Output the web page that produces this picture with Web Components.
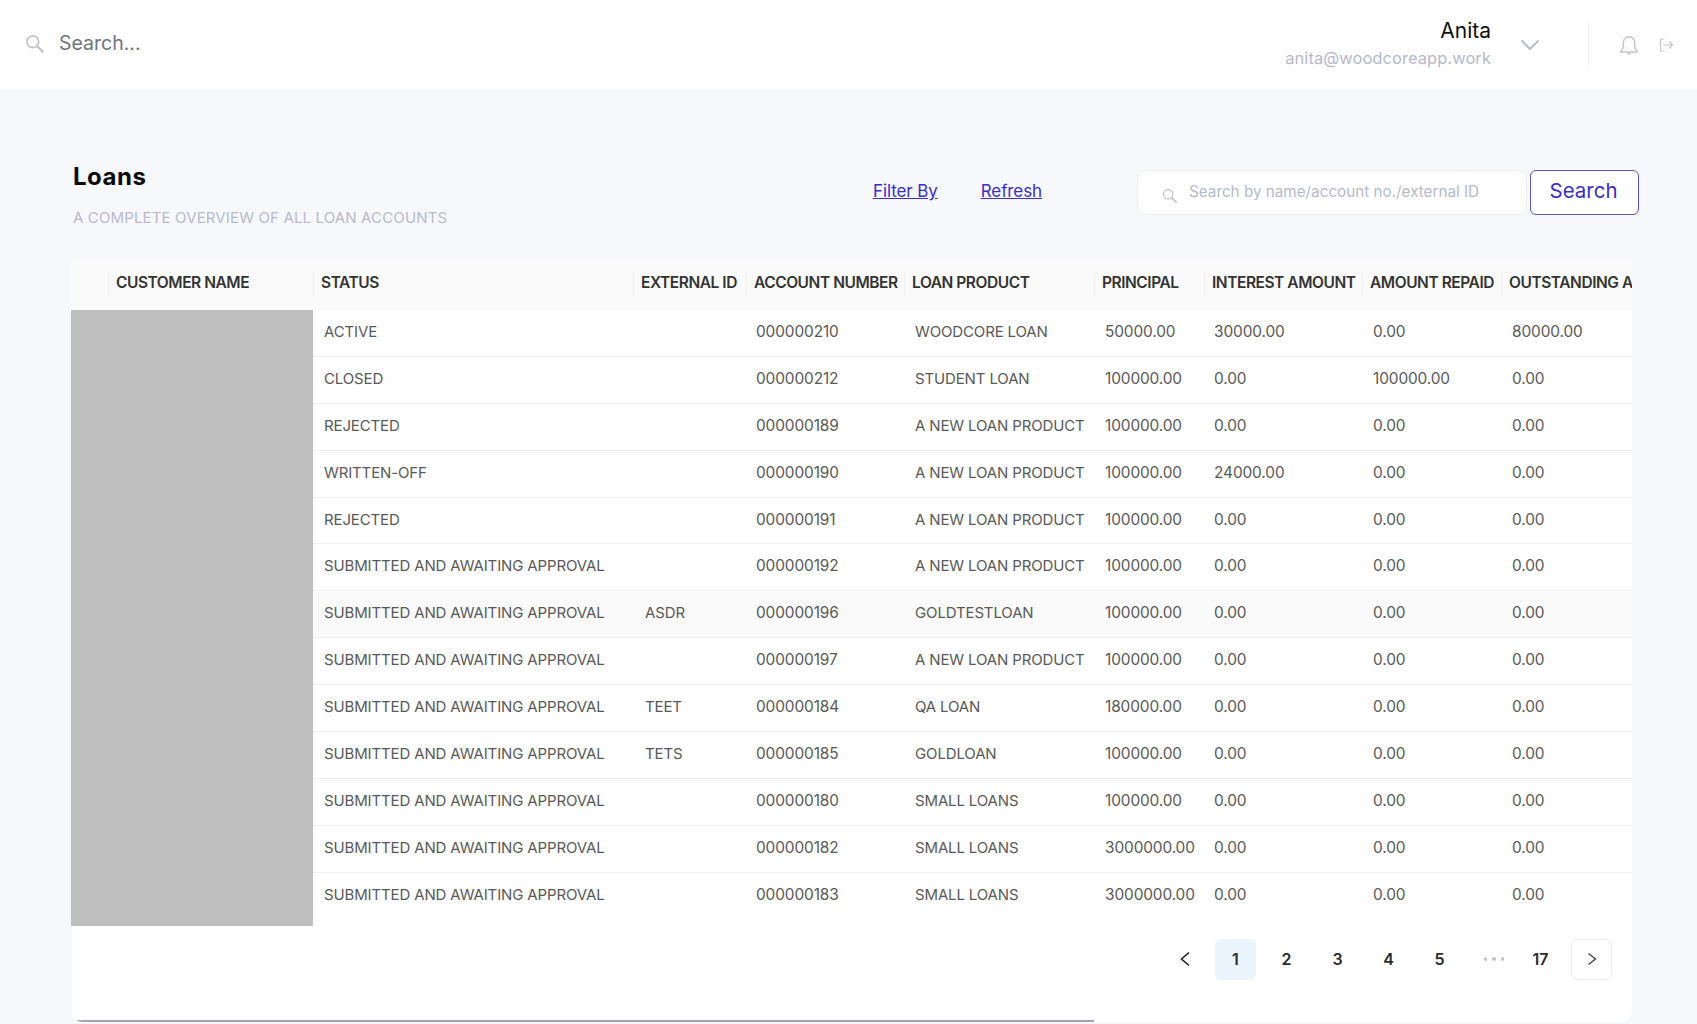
<!DOCTYPE html>
<html><head><meta charset="utf-8"><title>Loans</title>
<style>
html,body{margin:0;height:1024px;overflow:hidden;background:#f7f8fc;font-family:Inter,"Noto Sans",sans-serif;color:#595959}
</style></head><body>
<loan-page>
  <top-bar name="Anita" email="anita@woodcoreapp.work"></top-bar>
  <page-main>
    <page-title slot="title" heading="Loans" sub="A COMPLETE OVERVIEW OF ALL LOAN ACCOUNTS"></page-title>
    <toolbar-actions slot="actions"></toolbar-actions>
    <loan-table slot="table"></loan-table>
  </page-main>
</loan-page>
<script>
const searchIcon=(s,c)=>`<svg width="${s}" height="${s}" viewBox="0 0 20 20" fill="none" stroke="${c}" stroke-width="1.7" stroke-linecap="round"><circle cx="8.2" cy="8.2" r="6.2"/><path d="M12.8 12.8l6 6" stroke-width="2.2"/></svg>`;
function def(name,css,html){
  customElements.define(name,class extends HTMLElement{
    connectedCallback(){
      if(this.shadowRoot)return;
      const r=this.attachShadow({mode:'open'});
      r.innerHTML=`<style>${css}</style>`+(typeof html==='function'?html(this):html);
    }
  });
}
customElements.define('loan-page',class extends HTMLElement{
  constructor(){super();this.attachShadow({mode:'open'}).innerHTML='<style>:host{display:block;height:1024px;overflow:hidden}</style><slot></slot>';}
});
def('top-bar',`
:host{display:flex;align-items:center;height:89px;background:#fff;box-sizing:border-box;padding:0 24px 0 25px}
.s{display:flex;align-items:center;gap:15px;flex:1;color:#6f7480;font-size:19.500px;margin-top:-4px}
.s svg{display:block;margin-top:2px}
.u{text-align:right;margin-right:29px}
.n{color:#111;font-size:21px;line-height:24px}
.e{color:#b6b9ca;font-size:16.500px;line-height:24px;margin-top:3px;letter-spacing:.05px}
.c{display:block;margin-right:48px;margin-top:1px}
.d{width:1px;height:48px;background:#f5f5f7;margin-right:30px}
.b{display:block;margin-right:20px;margin-top:0}
.l{display:block;margin-top:1px}
`,h=>`<div class="s">${searchIcon(19,'#bfc2cc')}<span>Search...</span></div>
<div class="u"><div class="n">${h.getAttribute('name')}</div><div class="e">${h.getAttribute('email')}</div></div>
<svg class="c" width="20" height="12" viewBox="0 0 20 12" fill="none" stroke="#b9bcca" stroke-width="2"><path d="M1.500 1.500L10 10l8.500-8.500"/></svg>
<div class="d"></div>
<svg class="b" width="20" height="20" viewBox="0 0 20 20" fill="none" stroke="#c3c5cf" stroke-width="1.500" stroke-linejoin="round"><path d="M1.500 17h17c-1.800-1.800-2.800-3-2.800-6V7.500a5.700 5.700 0 0 0-11.400 0V11c0 3-1 4.200-2.800 6z"/><path d="M8 18.500h4"/></svg>
<svg class="l" width="14" height="14" viewBox="0 0 14 14" fill="none" stroke="#c3c5cf" stroke-width="1.200" stroke-linecap="round" stroke-linejoin="round"><path d="M5 1H1.500v12H5"/><path d="M4.500 7h9M10.500 4l3 3-3 3"/></svg>`);
def('page-main',`
:host{display:block;box-sizing:border-box;padding:69px 58px 0 71px}
.top{display:flex;justify-content:space-between;height:100px}
.tb{margin-left:2px}
`,`<div class="top"><div class="tb"><slot name="title"></slot></div><slot name="actions"></slot></div><slot name="table"></slot>`);
def('page-title',`
:host{display:block}
h1{margin:0;font-size:24px;line-height:32px;font-weight:700;color:#0a0a0a;letter-spacing:.5px;padding-top:3px}
p{margin:15px 0 0;font-size:15px;line-height:20px;color:#b8bbcb;letter-spacing:.14px}
`,h=>`<h1>${h.getAttribute('heading')}</h1><p>${h.getAttribute('sub')}</p>`);
def('toolbar-actions',`
:host{display:flex;align-items:flex-start;padding-top:12px}
a{color:#3a2fc4;text-decoration:underline;font-size:17px;letter-spacing:-.1px;line-height:42px;margin-right:43px;white-space:nowrap;cursor:pointer}
a.last{margin-right:95px}
.i{box-sizing:border-box;display:flex;align-items:center;width:390px;height:45px;background:#fff;border:1px solid #eceef3;border-radius:8px;padding:0 0 0 24px;gap:12px;color:#b6b9ca;font-size:15.250px}
.i svg{margin-top:5px;display:block}
.i span{margin-top:-3px}
button{box-sizing:border-box;width:109px;height:45px;margin-left:3px;background:#fff;border:1px solid #5a52c6;border-radius:6px;color:#3a2fc4;font:inherit;font-size:20.500px;padding:0 2px 5px 0}
`,`<a>Filter By</a><a class="last">Refresh</a><div class="i">${searchIcon(15,'#c0c3ce')}<span>Search by name/account no./external ID</span></div><button>Search</button>`);
const cols='37px 205px 320px 113px 158px 190px 110px 158px 139px 200px';
const rows=[
['ACTIVE','','000000210','WOODCORE LOAN','50000.00','30000.00','0.00','80000.00'],
['CLOSED','','000000212','STUDENT LOAN','100000.00','0.00','100000.00','0.00'],
['REJECTED','','000000189','A NEW LOAN PRODUCT','100000.00','0.00','0.00','0.00'],
['WRITTEN-OFF','','000000190','A NEW LOAN PRODUCT','100000.00','24000.00','0.00','0.00'],
['REJECTED','','000000191','A NEW LOAN PRODUCT','100000.00','0.00','0.00','0.00'],
['SUBMITTED AND AWAITING APPROVAL','','000000192','A NEW LOAN PRODUCT','100000.00','0.00','0.00','0.00'],
['SUBMITTED AND AWAITING APPROVAL','ASDR','000000196','GOLDTESTLOAN','100000.00','0.00','0.00','0.00'],
['SUBMITTED AND AWAITING APPROVAL','','000000197','A NEW LOAN PRODUCT','100000.00','0.00','0.00','0.00'],
['SUBMITTED AND AWAITING APPROVAL','TEET','000000184','QA LOAN','180000.00','0.00','0.00','0.00'],
['SUBMITTED AND AWAITING APPROVAL','TETS','000000185','GOLDLOAN','100000.00','0.00','0.00','0.00'],
['SUBMITTED AND AWAITING APPROVAL','','000000180','SMALL LOANS','100000.00','0.00','0.00','0.00'],
['SUBMITTED AND AWAITING APPROVAL','','000000182','SMALL LOANS','3000000.00','0.00','0.00','0.00'],
['SUBMITTED AND AWAITING APPROVAL','','000000183','SMALL LOANS','3000000.00','0.00','0.00','0.00']];
const heads=['','CUSTOMER NAME','STATUS','EXTERNAL ID','ACCOUNT NUMBER','LOAN PRODUCT','PRINCIPAL','INTEREST AMOUNT','AMOUNT REPAID','OUTSTANDING A'];
const textCol=[1,1,0,1,0,0,0,0];
def('loan-table',`
:host{display:block;width:1561px;height:764px;position:relative;overflow:hidden;background:linear-gradient(90deg,#f7f8fc 1px,#fff 1px);border-radius:0 0 12px 12px}
.head{display:grid;grid-template-columns:${cols};height:52px;background:#fafafa;align-items:center;font-size:15.500px;font-weight:600;color:#333;letter-spacing:-.45px;white-space:nowrap}
.head div{height:26px;line-height:24px;padding-left:7px;border-left:1px solid #f0f0f0}
.head div:first-child{border:0}
.body{display:flex}
.mask{width:242px;height:616px;background:#bfbfbf;flex:none}
.rows{flex:1}
.r{display:grid;grid-template-columns:322px 111px 159px 190px 109px 159px 139px 200px;height:46.900px;box-sizing:border-box;border-bottom:1px solid #f0f0f0;line-height:44px;font-size:15.400px;color:#595959;white-space:nowrap;letter-spacing:-.1px}
.r:last-child{border:0}
.r.h{background:#fafafa}
.r div{padding-left:10px}
.r div:first-child{padding-left:11px}
.r .t{font-size:15px;letter-spacing:-.14px}
.bar{position:absolute;left:2px;bottom:0;width:1021px;height:2px;background:#a5a5a8}
`,()=>`<div class="head">${heads.map(h=>`<div>${h}</div>`).join('')}</div>
<div class="body"><div class="mask"></div><div class="rows">${rows.map((r,i)=>`<div class="r${i==6?' h':''}">${r.map((c,j)=>`<div${textCol[j]?' class="t"':''}>${c}</div>`).join('')}</div>`).join('')}</div></div>
<pager-bar></pager-bar><div class="bar"></div>`);
def('pager-bar',`
:host{display:flex;justify-content:flex-end;align-items:center;margin-top:12px;padding-right:20px;height:42px;font-size:16px;font-weight:600;color:#2b2b2b}
.p{box-sizing:border-box;width:41px;height:41px;display:flex;align-items:center;justify-content:center;border-radius:6px;margin-left:10px}
.on{background:#e9f4fd}
.nx{border:1px solid #ebebeb}
.dots{box-sizing:border-box;width:41px;margin-left:9px;padding-left:9px;display:flex;justify-content:center;gap:5px}
.dots i{display:block;width:3.500px;height:3.500px;border-radius:50%;background:#c4c4c4}
`,`<div class="p"><svg width="14" height="16" viewBox="0 0 14 16" fill="none" stroke="#222" stroke-width="1.600"><path d="M11 1.500L3.500 8l7.500 6.500"/></svg></div>
<div class="p on">1</div><div class="p">2</div><div class="p">3</div><div class="p">4</div><div class="p">5</div>
<div class="dots"><i></i><i></i><i></i></div><div class="p">17</div>
<div class="p nx"><svg width="12" height="14" viewBox="0 0 12 14" fill="none" stroke="#444" stroke-width="1.400"><path d="M2.500 1.500L9.500 7l-7 5.500"/></svg></div>`);
</script>
</body></html>
